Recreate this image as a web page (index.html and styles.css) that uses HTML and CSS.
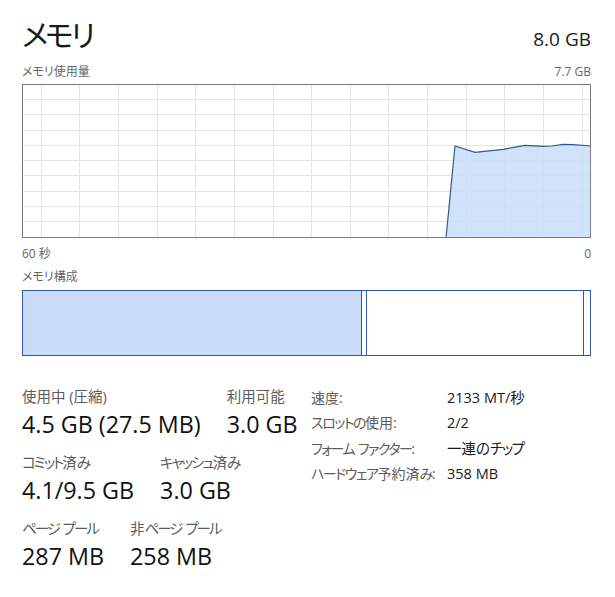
FILE: index.html
```html
<!DOCTYPE html>
<html lang="ja">
<head>
<meta charset="utf-8">
<title>メモリ</title>
<link rel="stylesheet" href="styles.css">
</head>
<body>
<div class="page">
  <header class="head">
    <h1 class="title">メモリ</h1>
    <div class="total">8.0 GB</div>
  </header>
  <div class="caption-row">
    <span>メモリ使用量</span>
    <span>7.7 GB</span>
  </div>
  <div class="graph">
    <svg width="569" height="154" viewBox="0 0 569 154" xmlns="http://www.w3.org/2000/svg">
      <g class="grid" stroke="#e4e4e4" stroke-width="1">
        <line x1="0" y1="15.5" x2="569" y2="15.5"/>
        <line x1="0" y1="30.5" x2="569" y2="30.5"/>
        <line x1="0" y1="46.5" x2="569" y2="46.5"/>
        <line x1="0" y1="61.5" x2="569" y2="61.5"/>
        <line x1="0" y1="76.5" x2="569" y2="76.5"/>
        <line x1="0" y1="91.5" x2="569" y2="91.5"/>
        <line x1="0" y1="107.5" x2="569" y2="107.5"/>
        <line x1="0" y1="122.5" x2="569" y2="122.5"/>
        <line x1="0" y1="137.5" x2="569" y2="137.5"/>
        <line x1="19.5" y1="0" x2="19.5" y2="154"/>
        <line x1="57.5" y1="0" x2="57.5" y2="154"/>
        <line x1="96.5" y1="0" x2="96.5" y2="154"/>
        <line x1="135.5" y1="0" x2="135.5" y2="154"/>
        <line x1="173.5" y1="0" x2="173.5" y2="154"/>
        <line x1="212.5" y1="0" x2="212.5" y2="154"/>
        <line x1="251.5" y1="0" x2="251.5" y2="154"/>
        <line x1="289.5" y1="0" x2="289.5" y2="154"/>
        <line x1="328.5" y1="0" x2="328.5" y2="154"/>
        <line x1="366.5" y1="0" x2="366.5" y2="154"/>
        <line x1="405.5" y1="0" x2="405.5" y2="154"/>
        <line x1="444.5" y1="0" x2="444.5" y2="154"/>
        <line x1="482.5" y1="0" x2="482.5" y2="154"/>
        <line x1="521.5" y1="0" x2="521.5" y2="154"/>
        <line x1="560.5" y1="0" x2="560.5" y2="154"/>
      </g>
      <polygon fill="#c9ddf9" fill-opacity="0.85" points="424,154 433,62 453,68.3 481.3,65.3 503,61.3 521.3,62.3 529.7,62 541.3,60.3 551.3,60.7 568,62 568,154"/>
      <polyline fill="none" stroke="#2b5a9a" stroke-width="1.2" points="424,154 433,62 453,68.3 481.3,65.3 503,61.3 521.3,62.3 529.7,62 541.3,60.3 551.3,60.7 569,62"/>
      <rect x="0.5" y="0.5" width="568" height="153" fill="none" stroke="#7a7a7a" stroke-width="1"/>
    </svg>
  </div>
  <div class="axis-row">
    <span>60 秒</span>
    <span>0</span>
  </div>
  <div class="caption">メモリ構成</div>
  <div class="composition">
    <div class="seg seg-inuse"></div>
    <div class="seg seg-modified"></div>
    <div class="seg seg-standby"></div>
    <div class="seg seg-free"></div>
  </div>
  <section class="stats">
    <div class="stats-main">
      <div class="stat-row">
        <div class="stat">
          <div class="stat-label">使用中 (圧縮)</div>
          <div class="stat-value">4.5 GB (27.5 MB)</div>
        </div>
        <div class="stat">
          <div class="stat-label">利用可能</div>
          <div class="stat-value">3.0 GB</div>
        </div>
      </div>
      <div class="stat-row">
        <div class="stat">
          <div class="stat-label"><span class="kana">コミット</span>済<span class="kana">み</span></div>
          <div class="stat-value">4.1/9.5 GB</div>
        </div>
        <div class="stat">
          <div class="stat-label"><span class="kana">キャッシュ</span>済<span class="kana">み</span></div>
          <div class="stat-value">3.0 GB</div>
        </div>
      </div>
      <div class="stat-row">
        <div class="stat">
          <div class="stat-label"><span class="kana">ページ</span> <span class="kana">プール</span></div>
          <div class="stat-value">287 MB</div>
        </div>
        <div class="stat">
          <div class="stat-label">非<span class="kana">ページ</span> <span class="kana">プール</span></div>
          <div class="stat-value">258 MB</div>
        </div>
      </div>
    </div>
    <dl class="specs">
      <dt>速度:</dt><dd>2133 MT/秒</dd>
      <dt><span class="kana">スロットの</span>使用:</dt><dd>2/2</dd>
      <dt><span class="kana">フォーム</span> <span class="kana">ファクター</span>:</dt><dd>一連の<span class="kana">チップ</span></dd>
      <dt><span class="kana">ハードウェア</span>予約済<span class="kana">み</span>:</dt><dd>358 MB</dd>
    </dl>
  </section>
</div>
</body>
</html>
```
FILE: styles.css
```css
* { box-sizing: border-box; }
html, body {
  margin: 0;
  padding: 0;
  background: #ffffff;
}
body {
  font-family: "Open Sans", "Noto Sans CJK JP", sans-serif;
  font-feature-settings: "palt";
  color: #1a1a1a;
}
.page {
  width: 615px;
  padding: 0 24px 0 22px;
}
.head {
  display: flex;
  justify-content: space-between;
  align-items: baseline;
  padding-top: 15px;
  height: 58px;
}
.title {
  margin: 0;
  font-size: 30px;
  font-weight: 400;
  line-height: 40px;
  letter-spacing: -3px;
}
.total {
  font-size: 19px;
  line-height: 24px;
}
.caption-row {
  display: flex;
  justify-content: space-between;
  font-size: 12px;
  line-height: 16px;
  color: #666666;
  height: 26px;
  padding-top: 6px;
}
.graph {
  height: 154px;
  line-height: 0;
}
.graph svg { display: block; }
.axis-row {
  display: flex;
  justify-content: space-between;
  font-size: 12px;
  line-height: 16px;
  color: #666666;
  padding-top: 8px;
  height: 28px;
}
.caption {
  font-size: 12px;
  line-height: 16px;
  color: #666666;
  height: 24px;
  padding-top: 3px;
}
.composition {
  display: flex;
  height: 66px;
  border: 1px solid #2b5a9a;
}
.seg { height: 100%; }
.seg-inuse {
  width: 339px;
  background: #c9ddf9;
  border-right: 1px solid #2b5a9a;
}
.seg-modified {
  width: 5px;
  border-right: 1px solid #2b5a9a;
}
.seg-standby {
  flex: 1;
  border-right: 1px solid #2b5a9a;
}
.seg-free { width: 6px; }
.stats {
  display: flex;
  align-items: flex-start;
  padding-top: 30px;
}
.stats-main {
  width: 289px;
  display: flex;
  flex-direction: column;
  gap: 12px;
}
.stat-row {
  display: flex;
  gap: 26px;
}
.stat-label {
  font-size: 14.5px;
  line-height: 22px;
  color: #5c5c5c;
}
.stat-label .kana { letter-spacing: -2px; }
.stat-value {
  font-size: 23.3px;
  line-height: 32px;
  color: #111111;
}
.specs {
  margin: 0;
  display: grid;
  grid-template-columns: 136px auto;
  font-size: 14px;
  line-height: 25.3px;
  margin-top: -1px;
}
.specs .kana { letter-spacing: -1.5px; }
.specs dt {
  color: #5c5c5c;
  white-space: nowrap;
}
.specs dd {
  margin: 0;
  color: #1a1a1a;
  font-size: 14.5px;
}
```
